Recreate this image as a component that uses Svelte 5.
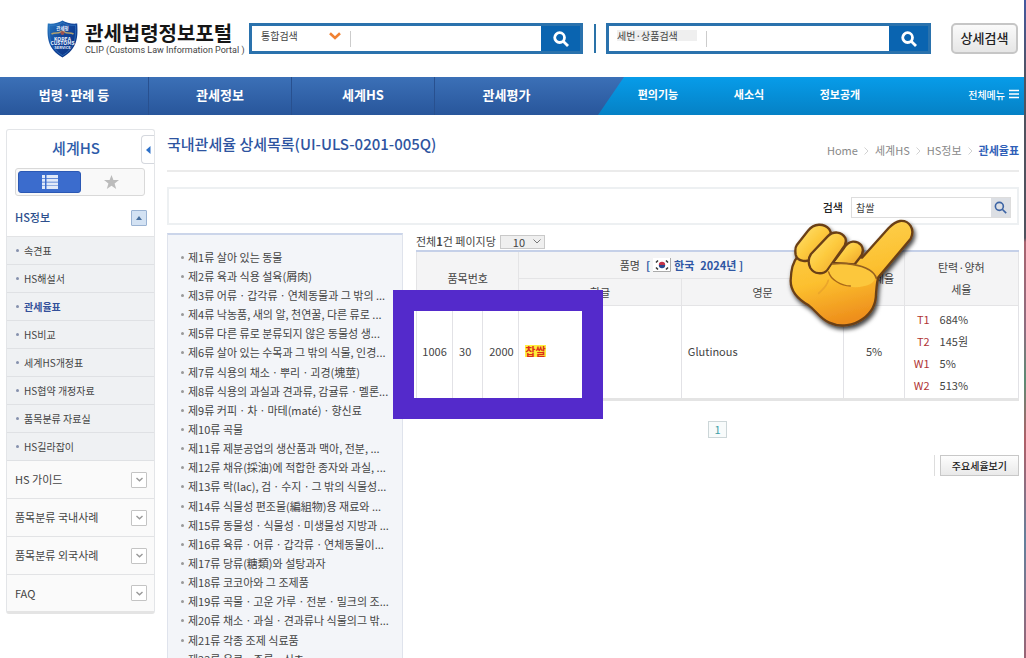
<script lang="ts">
	const mainMenu = ["법령·판례 등", "관세정보", "세계HS", "관세평가"];
	const utilMenu = ["편의기능", "새소식", "정보공개"];

	const subMenu = [
		"속견표",
		"HS해설서",
		"관세율표",
		"HS비교",
		"세계HS개정표",
		"HS협약 개정자료",
		"품목분류 자료실",
		"HS길라잡이",
	];
	const closedMenu = ["HS 가이드", "품목분류 국내사례", "품목분류 외국사례", "FAQ"];

	const breadcrumb = ["Home", "세계HS", "HS정보"];

	const chapters = [
		"제1류 살아 있는 동물",
		"제2류 육과 식용 설육(屑肉)",
		"제3류 어류ㆍ갑각류ㆍ연체동물과 그 밖의 ...",
		"제4류 낙농품, 새의 알, 천연꿀, 다른 류로 ...",
		"제5류 다른 류로 분류되지 않은 동물성 생...",
		"제6류 살아 있는 수목과 그 밖의 식물, 인경...",
		"제7류 식용의 채소ㆍ뿌리ㆍ괴경(塊莖)",
		"제8류 식용의 과실과 견과류, 감귤류ㆍ멜론...",
		"제9류 커피ㆍ차ㆍ마테(maté)ㆍ향신료",
		"제10류 곡물",
		"제11류 제분공업의 생산품과 맥아, 전분, ...",
		"제12류 채유(採油)에 적합한 종자와 과실, ...",
		"제13류 락(lac), 검ㆍ수지ㆍ그 밖의 식물성...",
		"제14류 식물성 편조물(編組物)용 재료와 ...",
		"제15류 동물성ㆍ식물성ㆍ미생물성 지방과 ...",
		"제16류 육류ㆍ어류ㆍ갑각류ㆍ연체동물이...",
		"제17류 당류(糖類)와 설탕과자",
		"제18류 코코아와 그 조제품",
		"제19류 곡물ㆍ고운 가루ㆍ전분ㆍ밀크의 조...",
		"제20류 채소ㆍ과실ㆍ견과류나 식물의그 밖...",
		"제21류 각종 조제 식료품",
		"제22류 음료ㆍ주류ㆍ식초",
	];

	const rates = [
		{ code: "T1", value: "684%" },
		{ code: "T2", value: "145원" },
		{ code: "W1", value: "5%" },
		{ code: "W2", value: "513%" },
	];

	let keyword = $state("찹쌀");
	let pageSize = $state("10");
</script>

{#snippet magnifier(size: number, stroke: number)}
	<svg width={size} height={size} viewBox="0 0 16 16" fill="none" stroke="currentColor" stroke-width={stroke} aria-hidden="true">
		<circle cx="6.6" cy="6.6" r="4.9" />
		<path d="M10.2 10.2L15 15" />
	</svg>
{/snippet}

<div class="frame">
	<div class="page">
		<header class="top">
			<a class="brand" href="/">
				<svg class="shield" viewBox="0 0 31 38" aria-hidden="true">
					<defs>
						<linearGradient id="shield-fill" x1="0" y1="0" x2="1" y2="1">
							<stop offset="0" stop-color="#2b7fc4" />
							<stop offset="0.45" stop-color="#12459b" />
							<stop offset="1" stop-color="#0a2f7c" />
						</linearGradient>
					</defs>
					<path d="M15.500 .5C12 3 6 4 .8 3.500C0 16 0 29 15.500 37.500C31 29 31 16 30.200 3.500C25 4 19 3 15.500 .5Z" fill="url(#shield-fill)" />
					<path d="M15.500 2.500C12 5 7 5.700 2.500 5.300C2 17 2.500 28 15.500 35.500C28.500 28 29 17 28.500 5.300C24 5.700 19 5 15.500 2.500Z" fill="none" stroke="#3d86cf" stroke-width=".6" />
					<path d="M4.500 14C8 12 11 14 13.500 12L15.500 11L17.500 12C20 14 23 12 26.500 14" fill="none" stroke="#b0a071" stroke-width="1.600" />
					<circle cx="15.500" cy="13" r="2" fill="#a0524f" />
					<g fill="#eef5ff" font-weight="700" text-anchor="middle">
						<text x="15.500" y="9.500" font-size="4.500">관세청</text>
						<text x="15.500" y="20.500" font-size="5">KOREA</text>
						<text x="15.500" y="25" font-size="5">CUSTOMS</text>
						<text x="15.500" y="29" font-size="4">SERVICE</text>
					</g>
				</svg>
				<span class="brand-text">
					<strong>관세법령정보포털</strong>
					<small>CLIP (Customs Law Information Portal )</small>
				</span>
			</a>

			<form class="search" onsubmit={(e) => e.preventDefault()}>
				<div class="scope">
					<select aria-label="검색 범위">
						<option>통합검색</option>
					</select>
					<svg width="12" height="8" viewBox="0 0 12 8" fill="none" stroke="#f08132" stroke-width="2.6" aria-hidden="true">
						<path d="M1 1.300L6 6L11 1.300" />
					</svg>
				</div>
				<input type="text" aria-label="통합검색어" />
				<button aria-label="통합검색 실행">{@render magnifier(16, 2.8)}</button>
			</form>

			<span class="split"></span>

			<form class="search product" onsubmit={(e) => e.preventDefault()}>
				<label for="product">세번·상품검색</label>
				<input id="product" type="text" />
				<button aria-label="상품검색 실행">{@render magnifier(16, 2.8)}</button>
			</form>

			<button class="detail-search">상세검색</button>
		</header>

		<nav class="menu">
			{#each mainMenu as item}
				<a class="menu-item" href="#menu">{item}</a>
			{/each}
			<div class="util">
				{#each utilMenu as item}
					<a href="#util">{item}</a>
				{/each}
				<a class="all" href="#all">
					전체메뉴
					<svg width="10" height="10" viewBox="0 0 10 10" stroke="currentColor" stroke-width="1.5" aria-hidden="true">
						<path d="M0 1.500H10M0 5H10M0 8.500H10" />
					</svg>
				</a>
			</div>
		</nav>

		<div class="body">
			<aside class="side">
				<h2>세계HS</h2>
				<button class="fold" aria-label="메뉴 접기">
					<svg width="5" height="8" viewBox="0 0 5 8" aria-hidden="true"><path d="M4.500 0V8L0 4Z" fill="#2c70c9" /></svg>
				</button>
				<div class="tabs">
					<button class="tab active" aria-label="목록">
						<svg width="16" height="14" viewBox="0 0 16 14" fill="#fff" aria-hidden="true">
							<path d="M0 0H3V3H0ZM4.500 0H16V3H4.500ZM0 3.700H3V6.700H0ZM4.500 3.700H16V6.700H4.500ZM0 7.400H3V10.400H0ZM4.500 7.400H16V10.400H4.500ZM0 11.100H3V14H0ZM4.500 11.100H16V14H4.500Z" opacity=".85" />
						</svg>
					</button>
					<button class="tab" aria-label="즐겨찾기">
						<svg width="15" height="14" viewBox="0 0 15 14" aria-hidden="true">
							<path d="M7.500 0L9.400 5H15L10.600 8.400L12.200 14L7.500 10.700L2.800 14L4.400 8.400L0 5H5.600Z" fill="#bcbcbc" />
						</svg>
					</button>
				</div>
				<a class="group open" href="#hs">
					HS정보
					<span class="toggle">
						<svg width="6" height="4" viewBox="0 0 6 4" aria-hidden="true"><path d="M0 4L3 0L6 4Z" fill="#47709f" /></svg>
					</span>
				</a>
				<ul class="sub">
					{#each subMenu as item}
						<li><a class:current={item === "관세율표"} href="#sub">{item}</a></li>
					{/each}
				</ul>
				{#each closedMenu as item}
					<a class="group" href="#group">
						{item}
						<span class="toggle">
							<svg width="7" height="5" viewBox="0 0 7 5" fill="none" stroke="#999" stroke-width="1.4" aria-hidden="true"><path d="M.5 1L3.500 3.800L6.500 1" /></svg>
						</span>
					</a>
				{/each}
			</aside>

			<main>
				<div class="title-bar">
					<h1>국내관세율 상세목록(UI-ULS-0201-005Q)</h1>
					<div class="crumbs">
						{#each breadcrumb as item}
							<a href="#crumb">{item}</a>
							<svg width="5" height="8" viewBox="0 0 5 8" fill="none" stroke="#d2d2d2" aria-hidden="true"><path d="M.5 .5L4 4L.5 7.500" /></svg>
						{/each}
						<strong>관세율표</strong>
					</div>
				</div>

				<form class="filter" onsubmit={(e) => e.preventDefault()}>
					<label for="keyword">검색</label>
					<div class="field">
						<input id="keyword" type="text" bind:value={keyword} />
						<button aria-label="검색">{@render magnifier(13, 2)}</button>
					</div>
				</form>

				<div class="columns">
					<ul class="chapters">
						{#each chapters as chapter}
							<li><a href="#chapter">{chapter}</a></li>
						{/each}
					</ul>

					<section class="result">
						<div class="count">
							<label for="size">전체<b>1</b>건 페이지당</label>
							<span class="size">
								<select id="size" bind:value={pageSize}>
									<option>10</option>
								</select>
								<svg width="8" height="5" viewBox="0 0 8 5" fill="none" stroke="#777" aria-hidden="true"><path d="M.5 .5L4 4L7.500 .5" /></svg>
							</span>
						</div>

						<div class="sheet">
							<table>
								<colgroup>
									<col class="c-heading" />
									<col class="c-sub" />
									<col class="c-item" />
									<col class="c-name" />
									<col class="c-name" />
									<col class="c-rate" />
									<col class="c-flex" />
								</colgroup>
								<thead>
									<tr>
										<th colspan="3" rowspan="2">품목번호</th>
										<th colspan="2">
											<span class="product-name">
												품명
												<b>[</b>
												<svg class="flag" width="18" height="14" viewBox="0 0 18 14" aria-hidden="true">
													<path d="M0 0H18V14H0Z" fill="#fff" />
													<path d="M17.500 0V13.500H0" fill="none" stroke="#aaa" />
													<path d="M5.800 7A3.200 3.200 0 0 1 12.200 7Z" fill="#c33348" />
													<path d="M5.800 7A3.200 3.200 0 0 0 12.200 7Z" fill="#27488f" />
													<path d="M3 4.500L5 2.500M3 9.500L5 11.500M13 2.500L15 4.500M13 11.500L15 9.500" stroke="#333" stroke-width="1.500" />
												</svg>
												<b>한국</b>
												<b>2024년 ]</b>
											</span>
										</th>
										<th rowspan="2">기본세율</th>
										<th rowspan="2">탄력·양허<br />세율</th>
									</tr>
									<tr>
										<th>한글</th>
										<th>영문</th>
									</tr>
								</thead>
								<tbody>
									<tr>
										<td class="center">1006</td>
										<td class="code">30</td>
										<td class="code">2000</td>
										<td><mark>찹쌀</mark></td>
										<td>Glutinous</td>
										<td class="center">5%</td>
										<td>
											<dl>
												{#each rates as rate}
													<dt>{rate.code}</dt>
													<dd>{rate.value}</dd>
												{/each}
											</dl>
										</td>
									</tr>
								</tbody>
							</table>
							<div class="highlight"></div>
						</div>

						<div class="pager"><a href="#page">1</a></div>
						<div class="actions"><button>주요세율보기</button></div>
					</section>
				</div>

				<svg class="hand" width="140" height="124" viewBox="0 0 420 372" aria-hidden="true">
					<defs>
						<linearGradient id="skin" x1="0" y1="0" x2=".3" y2="1">
							<stop offset="0" stop-color="#fdd65a" />
							<stop offset=".6" stop-color="#fcc02f" />
							<stop offset="1" stop-color="#ee8f1c" />
						</linearGradient>
						<linearGradient id="finger" x1="0" y1="0" x2="1" y2="1">
							<stop offset="0" stop-color="#ffe67c" />
							<stop offset=".5" stop-color="#fdca3e" />
							<stop offset="1" stop-color="#eda028" />
						</linearGradient>
						<filter id="hand-shadow" x="-10%" y="-10%" width="125%" height="125%">
							<feDropShadow dx="5" dy="9" stdDeviation="6" flood-color="#000" flood-opacity=".75" />
						</filter>
					</defs>
					<g filter="url(#hand-shadow)" stroke="#6b3f17" stroke-width="7" stroke-linejoin="round" stroke-linecap="round">
						<path d="M52 135C38 150 33 175 32 205C31 240 58 264 86 280C108 296 118 318 148 332C182 348 222 340 248 321C278 300 288 275 288 245C290 225 290 210 295 196L392 80C406 52 388 24 360 27C346 29 336 38 326 48L246 137L180 120Z" fill="url(#skin)" />
						<path d="M192 108C207 84 230 84 244 100C252 112 248 127 238 139L224 157L158 153Z" fill="url(#finger)" />
						<path d="M51 98L84 56C102 33 132 33 148 52C157 66 152 78 142 88L98 140C84 151 52 150 47 128C45 116 46 105 51 98Z" fill="url(#finger)" />
						<path d="M93 126L143 73C160 56 185 58 196 78C201 92 195 102 186 112L143 173C128 190 102 186 91 168C84 153 84 139 93 126Z" fill="url(#finger)" />
					</g>
					<path d="M157 157C194 152 242 158 267 173C278 180 284 188 285 199C282 215 262 224 226 226C184 224 148 204 144 178Z" fill="#fcc73c" />
					<path d="M157 156C195 151 242 158 267 173C278 180 286 188 289 199" fill="none" stroke="#946020" stroke-width="5" stroke-linecap="round" />
					<path d="M146 180C151 202 184 222 211 222" fill="none" stroke="#a96818" stroke-width="4" stroke-linecap="round" />
					<path d="M145 205C139 227 128 231 116 244" fill="none" stroke="#eba62b" stroke-width="5" stroke-linecap="round" />
				</svg>
			</main>
		</div>
	</div>
	<div class="edge"></div>
</div>

<style>
:global(body) {
	background: #fff;
}

.frame {
	display: flex;
	height: 100vh;
	overflow: hidden;
	font-family: "Noto Sans CJK KR", sans-serif;
	font-size: 11px;
	line-height: 19px;
	color: #444;
}

.frame :is(button, input, select) {
	font: inherit;
	color: inherit;
	margin: 0;
	padding: 0;
	border: 0;
	border-radius: 0;
	background: none;
	outline: none;
	min-width: 0;
}

.frame select {
	appearance: none;
}

.frame a {
	color: inherit;
	text-decoration: none;
}

.frame ul {
	list-style: none;
	margin: 0;
	padding: 0;
}

svg {
	display: block;
	flex-shrink: 0;
}

.page {
	flex: 1;
	min-width: 0;
}

.edge {
	width: 2px;
	background: linear-gradient(#4459a0 0, #50525e 80px, #50525e 238px, #a86470 242px, #8d6d80 330px, #5c8b74 380px, #b05f68 440px, #63809c 540px, #9a6475 100%);
}

/* header */
.top {
	display: grid;
	grid-template-columns: 249px 334fr 23px 325fr 87px;
	align-items: center;
	height: 77px;
	padding-right: 6px;
	box-sizing: border-box;
}

.brand {
	display: flex;
	align-items: center;
	gap: 7px;
	padding-left: 47px;
}

.shield {
	width: 31px;
	height: 38px;
}

.brand-text {
	display: flex;
	flex-direction: column;
	padding-top: 2px;
	white-space: nowrap;
}

.brand-text strong {
	font-size: 20px;
	line-height: 22px;
	color: #161616;
}

.brand-text small {
	font-family: Roboto, sans-serif;
	font-size: 9px;
	line-height: 13px;
	color: #444;
}

.search {
	display: flex;
	height: 31px;
	box-sizing: border-box;
	border: 3px solid #2a72ad;
	font-size: 10px;
}

.frame .search input {
	flex: 1;
	height: 16px;
	margin-top: 5px;
	padding: 0 8px;
	border-left: 1px solid #ccc;
}

.frame .search button {
	display: flex;
	align-items: center;
	justify-content: center;
	width: 39px;
	background: #0a64b0;
	color: #fff;
}

.scope {
	display: flex;
	align-items: center;
	width: 98px;
	height: 19px;
}

.frame .scope select {
	flex: 1;
	padding-left: 9px;
}

.scope svg {
	margin-right: 9px;
}

.product label {
	width: 88px;
	height: 11px;
	margin: 4px 9px 0 0;
	padding-left: 8px;
	box-sizing: border-box;
	line-height: 11px;
	background: linear-gradient(90deg, #fff 8px, #efefef 8px);
}

.split {
	justify-self: center;
	width: 2px;
	height: 29px;
	background: #2a72a8;
}

.frame .detail-search {
	height: 31px;
	margin-left: 20px;
	padding-bottom: 2px;
	border: 2px solid #c6c6c6;
	border-radius: 5px;
	background: linear-gradient(#fafafa, #e6e6e6);
	font-size: 13px;
	font-weight: 500;
	color: #222;
}

/* menu */
.menu {
	display: grid;
	grid-template-columns: 149fr 143fr 143fr 163fr 426fr;
	height: 38px;
	background: linear-gradient(#3b70b7, #28569b);
	color: #fff;
	font-size: 13px;
	font-weight: 700;
}

.menu-item {
	display: flex;
	align-items: center;
	justify-content: center;
	padding-bottom: 4px;
	border-right: 1px solid #28508f;
}

.menu-item:nth-child(4) {
	border-right: 0;
	padding-right: 20px;
}

.util {
	display: grid;
	grid-template-columns: 120fr 62fr 120fr 124fr;
	align-items: center;
	padding-bottom: 4px;
	background: linear-gradient(#079ce9, #0581c5);
	clip-path: polygon(26px 0, 100% 0, 100% 100%, 0 100%);
	font-size: 11px;
	text-align: center;
}

.util .all {
	display: flex;
	align-items: center;
	justify-content: flex-end;
	gap: 4px;
	padding-right: 5px;
	font-size: 10px;
	font-weight: 500;
}

/* left menu */
.body {
	display: flex;
	align-items: flex-start;
	gap: 12px;
	padding: 14px 5px 0 6px;
}

.side {
	position: relative;
	flex-shrink: 0;
	width: 149px;
	box-sizing: border-box;
	border: 1px solid #e3e5e8;
	border-bottom: 3px solid #e4e4e4;
	border-radius: 3px;
}

.side h2 {
	margin: 0;
	padding: 7px 9px 9px 0;
	font-size: 15px;
	line-height: 22px;
	font-weight: 500;
	color: #2e5ba9;
	text-align: center;
}

.frame .fold {
	position: absolute;
	top: 5px;
	right: 0;
	display: flex;
	align-items: center;
	justify-content: center;
	width: 13px;
	height: 29px;
	border: 1px solid #d5d8de;
	border-right: 0;
	border-radius: 4px 0 0 4px;
}

.tabs {
	display: flex;
	height: 28px;
	margin: 0 9px 0 8px;
	padding: 2px;
	box-sizing: border-box;
	border: 1px solid #d9d9d9;
	border-radius: 3px;
	background: #f9f9f9;
}

.frame .tab {
	display: flex;
	flex: 1;
	align-items: center;
	justify-content: center;
}

.frame .tab.active {
	border: 1px solid #2b58b4;
	border-radius: 3px;
	background: #3b6ccd;
}

.group {
	display: flex;
	align-items: center;
	justify-content: space-between;
	height: 38px;
	padding: 0 7px 0 8px;
	box-sizing: border-box;
	border-bottom: 1px solid #e2e3e5;
	background: #fafafa;
	color: #333;
}

.group:last-child {
	height: 36px;
	border-bottom: 0;
}

.group.open {
	margin-top: 3px;
	background: #fff;
	font-weight: 500;
	color: #2d4f8d;
}

.toggle {
	display: flex;
	align-items: center;
	justify-content: center;
	width: 14px;
	height: 14px;
	border: 1px solid #c4c4c4;
	border-radius: 1px;
	background: #fff;
}

.open .toggle {
	border-color: #9ab3d3;
	background: #d3e2f3;
}

.sub a {
	display: flex;
	align-items: center;
	gap: 5px;
	height: 28px;
	padding-left: 9px;
	box-sizing: border-box;
	border-bottom: 1px solid #dfe1e4;
	background: #eff1f3;
	font-size: 10px;
}

.sub a::before {
	content: "";
	width: 3px;
	height: 3px;
	border-radius: 50%;
	background: #8591ad;
}

.frame .sub .current {
	font-weight: 700;
	color: #33509a;
}

/* content */
main {
	position: relative;
	flex: 1;
	min-width: 0;
}

.title-bar {
	display: flex;
	justify-content: space-between;
	height: 43px;
	box-sizing: border-box;
	border-bottom: 2px solid #ebebeb;
	padding-top: 4px;
}

h1 {
	margin: 0;
	font-size: 15px;
	line-height: 22px;
	font-weight: 500;
	color: #2e54a0;
}

.crumbs {
	display: flex;
	align-items: center;
	gap: 6px;
	height: 19px;
	padding-top: 8px;
	color: #888;
}

.crumbs strong {
	color: #2f5fb8;
}

.filter {
	display: flex;
	align-items: center;
	justify-content: flex-end;
	gap: 8px;
	height: 38px;
	margin-top: 15px;
	padding: 3px 6px 0 0;
	box-sizing: border-box;
	border: 2px solid #edf0f2;
}

.filter label {
	font-weight: 500;
	color: #222;
}

.field {
	display: flex;
	width: 160px;
	height: 21px;
	box-sizing: border-box;
	border: 1px solid #ddd;
}

.frame .field input {
	flex: 1;
	padding-left: 4px;
	font-size: 10px;
}

.frame .field button {
	display: flex;
	align-items: center;
	justify-content: center;
	width: 19px;
	background: #dcdfe4;
	color: #3c64a5;
}

.columns {
	display: flex;
	align-items: flex-start;
	gap: 13px;
	padding-top: 8px;
}

.chapters {
	flex-shrink: 0;
	width: 236px;
	box-sizing: border-box;
	border: 1px solid #dfe3ec;
	border-top: 2px solid #cbd5ea;
	background: #f3f5f9;
}

.frame .chapters {
	padding: 13px 0 14px 13px;
}

.chapters li:nth-child(7n) {
	margin-top: 1px;
}

.chapters a {
	display: flex;
	align-items: center;
	gap: 4px;
	white-space: nowrap;
}

.chapters a::before {
	content: "";
	width: 3px;
	height: 3px;
	border-radius: 50%;
	background: #999;
}

.result {
	flex: 1;
	min-width: 0;
}

.count {
	display: flex;
	align-items: center;
	gap: 4px;
	height: 17px;
}

.size {
	display: flex;
	align-items: center;
	width: 45px;
	height: 14px;
	padding-right: 1px;
	box-sizing: border-box;
	border: 1px solid #c9c9c9;
	background: #efefef;
}

.frame .size select {
	width: 32px;
	height: 14px;
	padding-left: 12px;
	line-height: 12px;
}

.sheet {
	position: relative;
}

table {
	width: 100%;
	table-layout: fixed;
	border-collapse: collapse;
	border-top: 2px solid #c5d0e8;
	border-bottom: 3px solid #e4e4e4;
}

.c-heading { width: 6%; }
.c-sub { width: 5%; }
.c-item { width: 6%; }
.c-name { width: 27%; }
.c-rate { width: 10%; }
.c-flex { width: 19%; }

th {
	height: 27px;
	padding: 0;
	box-sizing: border-box;
	border: 1px solid #e4e4e6;
	background: #f4f4f5;
	font-weight: 400;
	line-height: 22px;
}

td {
	height: 94px;
	padding: 0 6px;
	box-sizing: border-box;
	border: 1px solid #e2e2e6;
	border-top: 0;
}

td.center {
	padding: 0;
	text-align: center;
}

.product-name {
	display: flex;
	align-items: center;
	justify-content: center;
	gap: 6px;
}

.product-name b {
	color: #2f57a4;
}

.flag {
	margin: 0 -3px;
}

mark {
	background: #ffee3d;
	color: #dc2f1c;
	font-weight: 700;
	line-height: 12px;
	display: inline-block;
}

dl {
	display: grid;
	grid-template-columns: 19px 1fr;
	column-gap: 10px;
	margin: 0;
	line-height: 22px;
}

dt {
	text-align: right;
	color: #b03434;
}

dd {
	margin: 0;
}

/* marks the matched row */
.highlight {
	position: absolute;
	top: 40px;
	left: -23px;
	width: 210px;
	height: 129px;
	box-sizing: border-box;
	border: 21px solid #542acb;
}

.pager {
	display: flex;
	justify-content: center;
	padding-top: 20px;
}

.pager a {
	width: 17px;
	border: 1px solid #ccd6d8;
	background: #f8fbfb;
	line-height: 15px;
	text-align: center;
	color: #42a0a8;
}

.actions {
	display: flex;
	justify-content: flex-end;
	margin-top: 17px;
}

.actions::before {
	content: "";
	border-left: 1px solid #ddd;
	margin-right: 5px;
}

.frame .actions button {
	height: 21px;
	padding: 0 11px;
	border: 1px solid #c8c8c8;
	background: linear-gradient(#fdfdfd, #e9e9e9);
	font-size: 10px;
	font-weight: 500;
	line-height: 17px;
	color: #222;
}

.hand {
	position: absolute;
	top: 83px;
	right: 99px;
}
</style>
